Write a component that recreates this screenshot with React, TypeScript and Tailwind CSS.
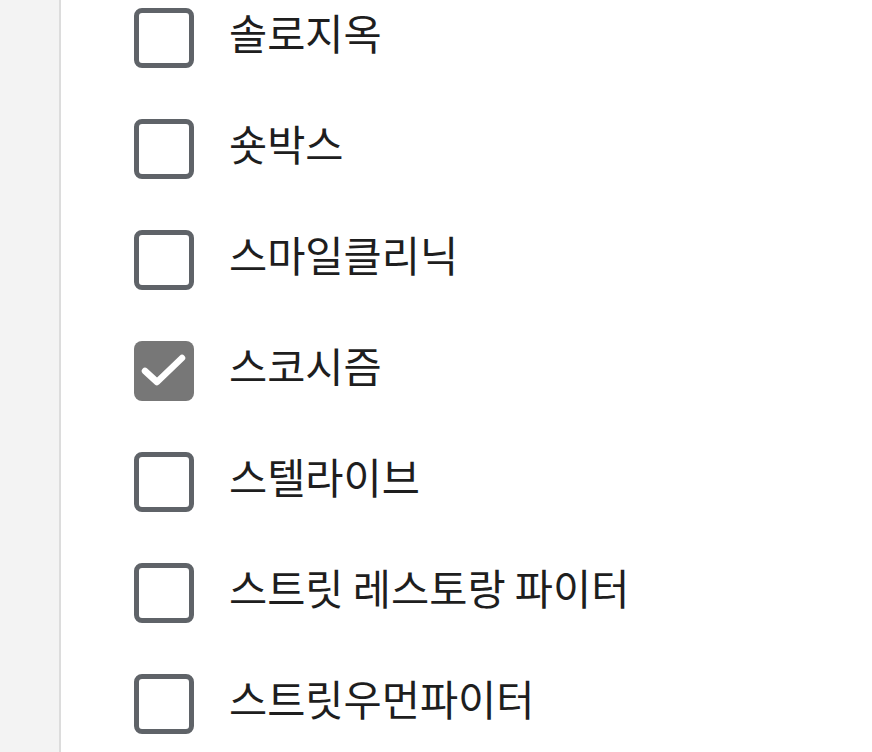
const items = [
  { label: '솔로지옥', checked: false },
  { label: '숏박스', checked: false },
  { label: '스마일클리닉', checked: false },
  { label: '스코시즘', checked: true },
  { label: '스텔라이브', checked: false },
  { label: '스트릿 레스토랑 파이터', checked: false },
  { label: '스트릿우먼파이터', checked: false },
];

function Checkbox({ checked }: { checked: boolean }) {
  if (checked) {
    return (
      <div className="flex h-[60px] w-[60px] shrink-0 items-center justify-center rounded-[8px] bg-[#777777]">
        <svg width="60" height="60" viewBox="0 0 60 60" fill="none">
          <path d="M11 30 L23 41 L48 17" stroke="white" strokeWidth="6.5" strokeLinecap="round" strokeLinejoin="round" />
        </svg>
      </div>
    );
  }
  return <div className="h-[60px] w-[60px] shrink-0 rounded-[8px] border-[5px] border-[#5f6368] bg-white" />;
}

export default function App() {
  return (
    <div className="flex h-[752px] w-full overflow-hidden bg-white" style={{ fontFamily: '"Noto Sans CJK KR", "Noto Sans", sans-serif' }}>
      <aside className="w-[61px] shrink-0 border-r-2 border-[#dcdcdc] bg-[#f3f3f3]" />
      <ul className="flex flex-col gap-[51px] pl-[73px] pt-[8px]">
        {items.map(item => (
          <li key={item.label} className="flex h-[60px] items-center gap-[35px]">
            <Checkbox checked={item.checked} />
            <span className="mb-[10px] text-[41.5px] leading-none text-[#1e1e1e] whitespace-nowrap">{item.label}</span>
          </li>
        ))}
      </ul>
    </div>
  );
}
